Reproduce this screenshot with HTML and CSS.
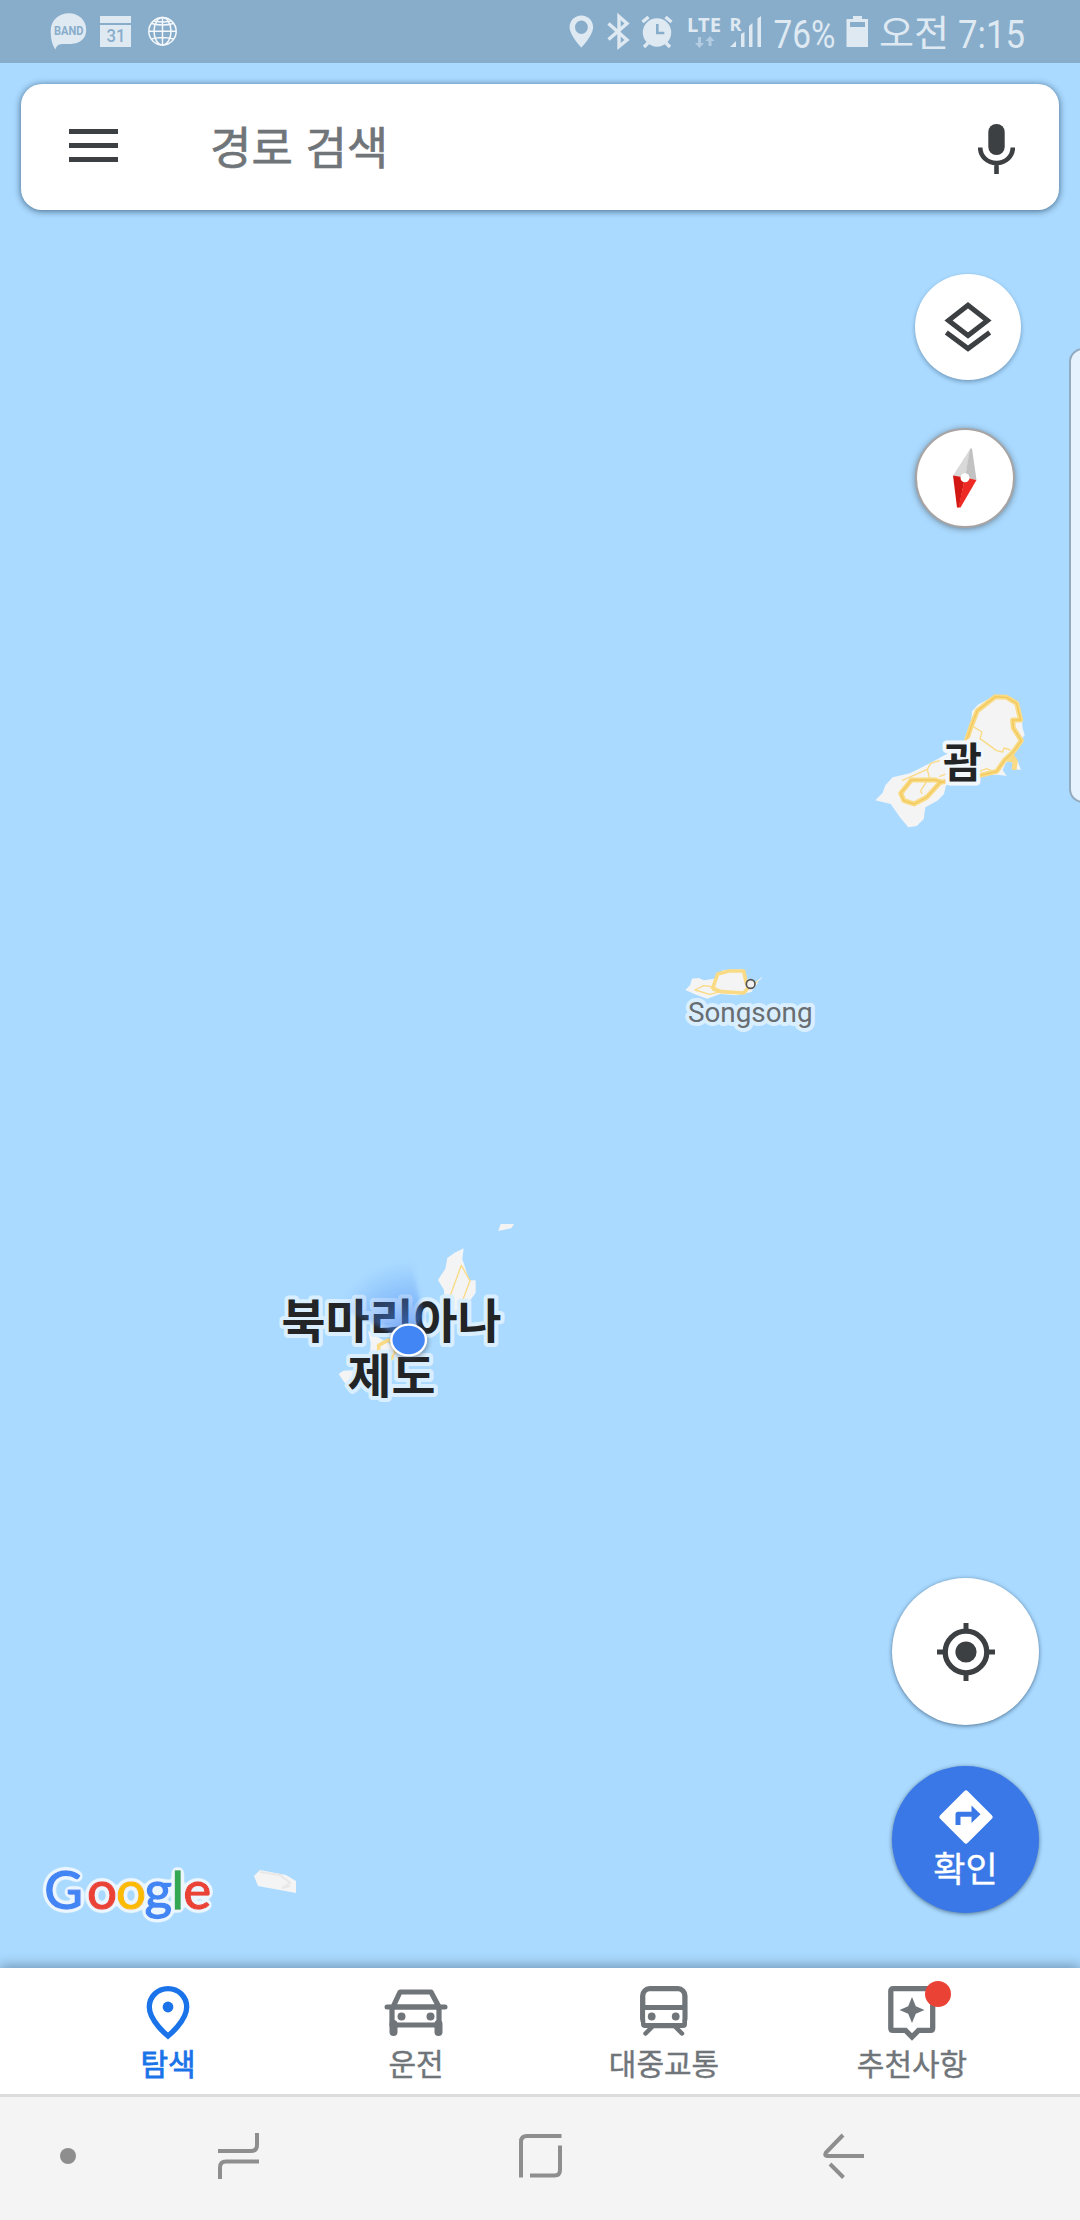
FILE: index.html
```html
<!DOCTYPE html>
<html lang="ko">
<head>
<meta charset="UTF-8">
<meta name="viewport" content="width=device-width, initial-scale=1.0">
<title>지도</title>
<link rel="stylesheet" href="styles.css">
</head>
<body>

<div class="screen">
  <header class="status-bar">
    <svg class="status-left" width="130" height="63" viewBox="50 0 130 63">
      <path fill="#dfe9f2" d="M69 13.2c-10 0-18.3 7-18.3 17.5 0 7 1 13 4.6 18.8 1.5-4 3-5.4 6.7-5.6 12 1 24.2-1 24.2-14.500C86.200 20 78.500 13.200 69 13.200z"/>
      <text class="band" x="54" y="34.500" textLength="29.500" lengthAdjust="spacingAndGlyphs">BAND</text>
      <path fill="#dfe9f2" d="M100 16h31v7h-31zM100 25h31v22h-31z"/>
      <text class="date" x="106.500" y="41.500" textLength="19" lengthAdjust="spacingAndGlyphs">31</text>
      <g class="globe">
        <circle cx="162.500" cy="31.300" r="13.700"/>
        <ellipse cx="162.500" cy="31.300" rx="8.500" ry="13.700"/>
        <path d="M162.500 17.500v27.500M149 31.300h27M151.500 23.500q11 3 22 0M151.500 39q11-3 22 0M154 21q8.500 2 17 0"/>
      </g>
    </svg>
    <svg class="status-right" width="480" height="63" viewBox="566 0 480 63">
      <g fill="#dfe9f2">
        <path fill-rule="evenodd" d="M581.400 15.500c-6.500 0-11.800 5-11.800 11.700 0 8 11.800 20.300 11.800 20.300s11.700-12.300 11.700-20.300c0-6.700-5.200-11.700-11.700-11.700zm0 4.900a6.400 6.800 0 1 1 0 13.600 6.400 6.800 0 1 1 0-13.600z"/>
        <circle cx="657" cy="32.500" r="14.200"/>
        <path d="M736 47v-6l-6 6zM741 34l3.500-2v15H741zM749 26l3.500-3v24H749zM757.500 18.500l3.500-2.500v31h-3.500z"/>
        <path fill-rule="evenodd" d="M853 16h9v3h6v28h-21.500V19h6.500zM850 22v5h15v-5z"/>
      </g>
      <g fill="#b3cce1">
        <path d="M698 37h3v6h3l-4.500 5-4.500-5h3zM708.500 46h3v-5h3l-4.500-5-4.500 5h3z"/>
      </g>
      <g fill="none" stroke="#dfe9f2" stroke-width="3.400">
        <path d="M608.500 23.500L627 40l-8 6.500v-30L627 23.500 608.500 39.500"/>
        <path d="M642.500 22l6-5M671.500 22l-6-5M648 43l-4 4M666 43l4 4"/>
      </g>
      <path class="alarm-hand" d="M657.300 24v9h7"/>
      <text class="lte" x="687" y="31.500" textLength="34" lengthAdjust="spacingAndGlyphs">LTE</text>
      <text class="roaming" x="729.500" y="31" textLength="12" lengthAdjust="spacingAndGlyphs">R</text>
      <text class="status-text" x="773.500" y="47.500" textLength="62" lengthAdjust="spacingAndGlyphs">76%</text>
      <text class="status-text ko" x="879" y="47" textLength="70" lengthAdjust="spacingAndGlyphs">오전</text>
      <text class="status-text" x="958" y="47.500" textLength="67" lengthAdjust="spacingAndGlyphs">7:15</text>
    </svg>
  </header>

  <main class="map-view">
    <svg class="map" width="1080" height="1905" viewBox="0 63 1080 1905">
      <defs>
        <radialGradient id="beam" gradientUnits="userSpaceOnUse" cx="446" cy="420" r="235">
          <stop offset="0" stop-color="#4285f4" stop-opacity=".75"/>
          <stop offset=".5" stop-color="#4285f4" stop-opacity=".35"/>
          <stop offset="1" stop-color="#4285f4" stop-opacity="0"/>
        </radialGradient>
        <filter id="soft" x="-50%" y="-50%" width="200%" height="200%"><feGaussianBlur stdDeviation="6"/></filter>
        <filter id="halo" x="-10%" y="-20%" width="120%" height="140%">
          <feGaussianBlur in="SourceAlpha" stdDeviation="2.500"/>
          <feComponentTransfer result="wide"><feFuncA type="linear" slope="12" intercept="-.6"/></feComponentTransfer>
          <feFlood flood-color="#ebf6ff"/>
          <feComposite in2="wide" operator="in"/>
          <feMerge><feMergeNode/><feMergeNode in="SourceGraphic"/></feMerge>
        </filter>
      </defs>

      <!-- Guam -->
      <g transform="translate(850 670) scale(.3333)">
        <path class="land" d="M76 391L98 368 106 346 128 322 180 310 235 282 285 255 345 222 364 158 366 124 384 104 436 76 470 76 504 96 516 150 518 175 524 195 512 212 500 240 488 258 504 276 513 300 498 298 482 270 468 278 458 300 470 318 445 314 400 316 330 332 288 346 282 372 262 392 226 412 221 448 200 468 175 472 150 442 122 402z"/>
        <path class="road thin" d="M156 332L232 298 242 280 300 262 345 235M232 298L238 322 212 362 216 372M370 170L396 186 390 206 440 242 458 246 462 234 482 240M268 320L318 300M384 306L410 296 425 302"/>
        <path class="road" d="M345 225L364 168 382 122 436 80 470 82 500 100 512 150 488 150 490 174 514 212 488 248 464 270 440 304 390 316 320 326 270 338 230 382 192 402 162 392 152 370 184 330 256 330 278 338M480 250L496 274 492 300M466 266L490 270"/>
        <path class="road-core" d="M345 225L364 168 382 122 436 80 470 82 500 100 512 150 488 150 490 174 514 212 488 248 464 270 440 304 390 316 320 326 270 338 230 382 192 402 162 392 152 370 184 330 256 330 278 338"/>
      </g>

      <!-- Rota -->
      <g transform="translate(660 940) scale(.3333)">
        <path class="land" d="M76 150l14-14 6-20 20-2 16 7 30-5 28-26 60-2 12 30 32 10-20 28-44 10-50-4-38 14-30-10z"/>
        <path class="road thin" d="M105 150l26-13 32 4 20 14-34 8zM280 134l14-12"/>
        <path class="road rota" d="M157 148l16-46 34-9h44l8 36 6 14-14 16-66-4-28-9"/>
        <circle class="town" cx="272" cy="132" r="13"/>
        <path d="M292 124l14-11" stroke="#f4f4f4" stroke-width="3"/>
      </g>
      <text class="label-town" x="688" y="1021.500" textLength="124.500" lengthAdjust="spacingAndGlyphs">Songsong</text>
      <text class="label-area guam" x="943" y="777.500" textLength="39" lengthAdjust="spacingAndGlyphs">괌</text>

      <!-- Saipan and Tinian -->
      <g transform="translate(260 1200) scale(.3333)">
        <path class="land" d="M722 72h40l-8 13-39 8zM534 240L556 206 562 174 584 158 611 145 607 177 619 213 627 241 647 241 647 278 630 302 604 326 594 338 560 350 538 336 554 308 552 270zM324 392L344 406 404 440 400 480 360 500 300 530 262 558 248 540 236 522 250 512 290 510 330 470 332 430z"/>
        <path class="road thin" d="M566 300L604 196 630 242 598 328 574 342 544 339 539 322"/>
        <path class="road rota" d="M356 486V436L386 420 406 434V464L376 490"/>
      </g>
      <text class="label-area" x="281.500" y="1337.500" textLength="220" lengthAdjust="spacingAndGlyphs">북마리아나</text>
      <text class="label-area" x="347.500" y="1392.500" textLength="88" lengthAdjust="spacingAndGlyphs">제도</text>

      <!-- current position -->
      <g transform="translate(260 1200) scale(.3333)">
        <path fill="url(#beam)" d="M446 420L230 320Q320 190 456 186L490 350z" filter="url(#soft)"/>
        <ellipse cx="448" cy="426" rx="58" ry="52" fill="#456" opacity=".45" filter="url(#soft)"/>
        <ellipse cx="446" cy="420" rx="52" ry="46" fill="#4285f4" stroke="#fff" stroke-width="7"/>
      </g>

      <path class="land" d="M254 1876l6-6 26 5 10 6v12l-38-7z"/>
      <path d="M260 1872l20 3 10 8-8 5 8-2" fill="none" stroke="#e8e8e8" stroke-width="2"/>

      <text class="google" x="44.200 86.900 116.100 144.500 171.500 183.200" y="1908.500" filter="url(#halo)"><tspan fill="#4285f4" stroke="#4285f4">G</tspan><tspan fill="#ea4335" stroke="#ea4335">o</tspan><tspan fill="#fbbc05" stroke="#fbbc05">o</tspan><tspan fill="#4285f4" stroke="#4285f4">g</tspan><tspan fill="#34a853" stroke="#34a853">l</tspan><tspan fill="#ea4335" stroke="#ea4335">e</tspan></text>
    </svg>

    <div class="search-box">
      <svg class="menu-icon" width="49" height="33" viewBox="0 0 49 33"><path fill="#3c4043" d="M0 0h49v5H0zM0 14h49v5H0zM0 28h49v5H0z"/></svg>
      <span class="search-hint">경로 검색</span>
      <svg class="mic-icon" width="37" height="50" viewBox="0 0 37 50">
        <rect x="10.300" width="16.400" height="31" rx="8" fill="#3c4043"/>
        <path d="M2.200 23.500c0 9 7.300 15.500 16.300 15.500s16.300-6.500 16.300-15.500M18.500 39v11" fill="none" stroke="#3c4043" stroke-width="4.600"/>
      </svg>
    </div>

    <div class="map-controls">
      <div class="round layers">
        <svg width="48" height="50" viewBox="0 0 48 50">
          <path d="M24 3.300L43.500 18.600 24 33.600 4.500 18.600zM2.300 30.500L24 46.600 45.700 30.500" fill="none" stroke="#3c4043" stroke-width="5"/>
        </svg>
      </div>
      <div class="round compass">
        <svg width="26" height="60" viewBox="0 0 26 60">
          <path fill="#d9d9d9" d="M18.500.5L1 27.500l12 2z"/>
          <path fill="#c2c2c2" d="M18 .5h2L24.500 32 13 29.500z"/>
          <path fill="#d31814" d="M1 27.500L13 29.500 7 59.500H5z"/>
          <path fill="#ed2a24" d="M24.500 32L13 29.500 6.500 59.500h2z"/>
          <circle cx="13" cy="29.800" r="4.500" fill="#fff"/>
        </svg>
      </div>
    </div>

    <div class="edge-handle"></div>

    <div class="fabs">
      <div class="fab">
        <svg width="58" height="58" viewBox="0 0 58 58">
          <circle cx="29" cy="29" r="10.600" fill="#3c4043"/>
          <circle cx="29" cy="29" r="20.800" fill="none" stroke="#3c4043" stroke-width="5.300"/>
          <path d="M29 0v8M29 50v8M0 29h8M50 29h8" stroke="#3c4043" stroke-width="5"/>
        </svg>
      </div>
      <div class="fab directions">
        <svg width="54" height="54" viewBox="0 0 54 54">
          <path fill="#fff" fill-rule="evenodd" d="M25.200 1.200q1.800-1.800 3.600 0l24 24q1.800 1.800 0 3.600l-24 24q-1.800 1.800-3.600 0l-24-24q-1.800-1.800 0-3.600zM32.500 15.500v6.200H19q-2.500 0-2.500 2.500V35h5v-8.200h11v6.200l9-8.800z"/>
        </svg>
        <span>확인</span>
      </div>
    </div>
  </main>

  <nav class="tabs">
    <div class="tab active">
      <svg width="64" height="56" viewBox="0 0 64 56">
        <path d="M32 2.700c-10.600 0-18.700 8-18.700 18.300C13.300 35 32 50 32 50s18.700-15 18.700-29C50.700 10.700 42.600 2.700 32 2.700z" fill="none" stroke="#1a73e8" stroke-width="5.300"/>
        <circle cx="32" cy="21" r="5.400" fill="#1a73e8"/>
      </svg>
      <span>탐색</span>
    </div>
    <div class="tab">
      <svg width="64" height="56" viewBox="0 0 64 56">
        <path d="M9 21l7-15h31l8 15M8 21h47v18H8z" fill="none" stroke="#70757a" stroke-width="5.200" stroke-linejoin="round"/>
        <path d="M3 21h58" stroke="#70757a" stroke-width="5" stroke-linecap="round"/>
        <path d="M9.500 38v8M54.500 38v8" stroke="#70757a" stroke-width="8" stroke-linecap="round"/>
        <circle cx="17.500" cy="30.500" r="4" fill="#70757a"/>
        <circle cx="46.500" cy="30.500" r="4" fill="#70757a"/>
      </svg>
      <span>운전</span>
    </div>
    <div class="tab">
      <svg width="64" height="56" viewBox="0 0 64 56">
        <rect x="10.700" y="2.700" width="42.200" height="37" rx="7" fill="none" stroke="#70757a" stroke-width="5.300"/>
        <path d="M9 21.500h46" stroke="#70757a" stroke-width="5"/>
        <path d="M9 34v4q0 4 4 4h38q4 0 4-4v-4z" fill="#70757a"/>
        <rect x="13.300" y="24" width="37" height="13" fill="#fff"/>
        <circle cx="19.700" cy="30.500" r="3.900" fill="#70757a"/>
        <circle cx="43.700" cy="30.500" r="3.900" fill="#70757a"/>
        <path d="M20 41l-6.500 6.500M43.500 41l6.500 6.500" stroke="#70757a" stroke-width="4.500" stroke-linecap="round"/>
      </svg>
      <span>대중교통</span>
    </div>
    <div class="tab">
      <svg width="64" height="56" viewBox="0 0 64 56">
        <path d="M13 2.700h37.500q2.200 0 2.200 2.200v37.300q0 2.200-2.200 2.200H38.500L32 51l-6.500-6.600H13q-2.200 0-2.200-2.200V4.900q0-2.200 2.200-2.200z" fill="none" stroke="#70757a" stroke-width="5.300"/>
        <path d="M32 11l3.800 9.200L44.500 24l-8.700 3.800L32 37l-3.800-9.200L19.500 24l8.700-3.800z" fill="#70757a"/>
      </svg>
      <span>추천사항</span>
      <i class="badge"></i>
    </div>
  </nav>

  <footer class="system-bar">
    <i class="hide-dot"></i>
    <svg class="recents" width="42" height="46" viewBox="0 0 42 46"><path d="M0 18h33q6 0 6-6V0M2 46V34.500q0-6 6-6h33"/></svg>
    <svg class="home" width="43" height="44" viewBox="0 0 43 44"><path d="M2 43.500V8q0-6 6-6h34.500M41 11.500V36q0 5.500-5.500 5.500H11"/></svg>
    <svg class="back" width="42" height="46" viewBox="0 0 42 46"><path d="M20 2L3 19.500Q1 23 4.500 23H41M7 31l13.500 13.500"/></svg>
  </footer>
</div>

</body>
</html>
```
FILE: styles.css
```css
body {
  margin: 0;
  background: #aadaff;
  font-family: Roboto, "Noto Sans CJK KR", sans-serif;
}

.screen {
  display: flex;
  flex-direction: column;
  width: 1080px;
  height: 2220px;
  overflow: hidden;
}

svg {
  display: block;
  flex-shrink: 0;
}

/* status bar */
.status-bar {
  display: flex;
  justify-content: space-between;
  height: 63px;
  padding: 0 34px 0 50px;
  background: #88adcb;
}

.band {
  font: bold 12px Roboto, sans-serif;
  fill: #88adcb;
}

.date {
  font: 500 19px Roboto, sans-serif;
  fill: #88adcb;
}

.globe {
  fill: none;
  stroke: #f4f8fb;
  stroke-width: 1.5;
}

.alarm-hand {
  fill: none;
  stroke: #88adcb;
  stroke-width: 2.6;
}

.lte,
.roaming {
  font: bold 20px "Noto Sans", sans-serif;
  fill: #dfe9f2;
}

.roaming {
  font-size: 18px;
}

.status-text {
  font: 39px Roboto, sans-serif;
  fill: #dfe9f2;
}

.status-text.ko {
  font: 37px "Noto Sans CJK KR", sans-serif;
}

/* map */
.map-view {
  position: relative;
  flex: 1;
  background: #aadaff;
}

.map {
  position: absolute;
  top: 0;
  left: 0;
}

.land {
  fill: #f4f4f4;
}

.road {
  fill: none;
  stroke: #f9da85;
  stroke-width: 15;
  stroke-linejoin: round;
}

.road.rota {
  stroke-width: 11;
}

.road.thin {
  stroke-width: 4;
}

.road-core {
  fill: none;
  stroke: #f1c95c;
  stroke-width: 4;
}

.town {
  fill: #f1f1f1;
  stroke: #555;
  stroke-width: 5;
}

.label-area {
  font: bold 47px "Noto Sans CJK KR", sans-serif;
  fill: #222426;
  stroke: #d9efff;
  stroke-width: 8;
  stroke-linejoin: round;
  paint-order: stroke;
}

.label-area.guam {
  font-size: 42px;
  stroke: #f1f7fa;
}

.label-town {
  font: 28px Roboto, sans-serif;
  fill: #686d71;
  stroke: #d9efff;
  stroke-width: 8;
  stroke-linejoin: round;
  paint-order: stroke;
}

.google {
  font: 53px Lato, sans-serif;
  stroke-width: 1.3;
}

.search-box {
  position: relative;
  display: flex;
  align-items: center;
  box-sizing: border-box;
  height: 126px;
  margin: 0 21px;
  top: 21px;
  padding: 0 44px 0 48px;
  border-radius: 21px;
  background: #fff;
  box-shadow: 0 1px 7px rgba(30, 60, 90, .75);
}

.search-hint {
  flex: 1;
  margin: 0 0 3px 92px;
  font-family: "Noto Sans CJK KR", sans-serif;
  font-size: 45px;
  line-height: 60px;
  color: #70757a;
  -webkit-text-stroke: .7px #70757a;
}

.mic-icon {
  align-self: flex-start;
  margin-top: 40px;
}

.menu-icon {
  margin-bottom: 3px;
}

.map-controls {
  position: absolute;
  top: 211px;
  right: 59px;
  display: flex;
  flex-direction: column;
  gap: 48px;
}

.round {
  display: flex;
  align-items: center;
  justify-content: center;
  border-radius: 50%;
  background: #fff;
}

.layers {
  width: 106px;
  height: 106px;
  box-shadow: 0 2px 4px rgba(30, 60, 90, .4);
}

.compass {
  box-sizing: border-box;
  width: 100px;
  height: 100px;
  border: 2px solid #a8a4a4;
  box-shadow: 0 1px 6px rgba(60, 60, 60, .55);
}

.edge-handle {
  position: absolute;
  top: 285px;
  right: -20px;
  box-sizing: border-box;
  width: 31px;
  height: 455px;
  border: 2px solid #93abbf;
  border-radius: 14px;
  background: #e6f3fe;
}

.fabs {
  position: absolute;
  right: 41px;
  bottom: 55px;
  display: flex;
  flex-direction: column;
  gap: 41px;
}

.fab {
  display: flex;
  flex-direction: column;
  align-items: center;
  justify-content: center;
  width: 147px;
  height: 147px;
  border-radius: 50%;
  background: #fff;
  box-shadow: 0 1px 4px rgba(30, 60, 90, .65);
}

.directions {
  background: #3b78e7;
}

.directions span {
  font-family: "Noto Sans CJK KR", sans-serif;
  font-size: 35px;
  line-height: 46px;
  color: #fff;
  -webkit-text-stroke: .4px #fff;
}

/* bottom tabs */
.tabs {
  position: relative;
  display: flex;
  box-sizing: border-box;
  height: 129px;
  padding: 18px 44px 0;
  border-bottom: 3px solid #ddd;
  background: #fff;
  box-shadow: 0 -2px 12px rgba(40, 60, 80, .45);
}

.tab {
  position: relative;
  display: flex;
  flex-direction: column;
  align-items: center;
  width: 248px;
  font-family: "Noto Sans CJK KR", sans-serif;
  font-size: 30px;
  line-height: 40px;
  color: #70757a;
  -webkit-text-stroke: .4px currentColor;
}

.tab.active {
  color: #1a73e8;
  -webkit-text-stroke-width: .8px;
}

.badge {
  position: absolute;
  top: -5px;
  left: 137px;
  width: 26px;
  height: 26px;
  border-radius: 50%;
  background: #ea4335;
}

/* system navigation */
.system-bar {
  position: relative;
  display: flex;
  align-items: center;
  height: 123px;
  padding: 0 0 6px 60px;
  box-sizing: border-box;
  background: #f4f4f4;
}

.system-bar path {
  fill: none;
  stroke: #8e8e8e;
  stroke-width: 4;
}

.hide-dot {
  width: 16px;
  height: 16px;
  border-radius: 50%;
  background: #8e8e8e;
}

.recents {
  margin-left: 142px;
}

.home {
  margin-left: 259px;
}

.back {
  margin-left: 261px;
}
```
